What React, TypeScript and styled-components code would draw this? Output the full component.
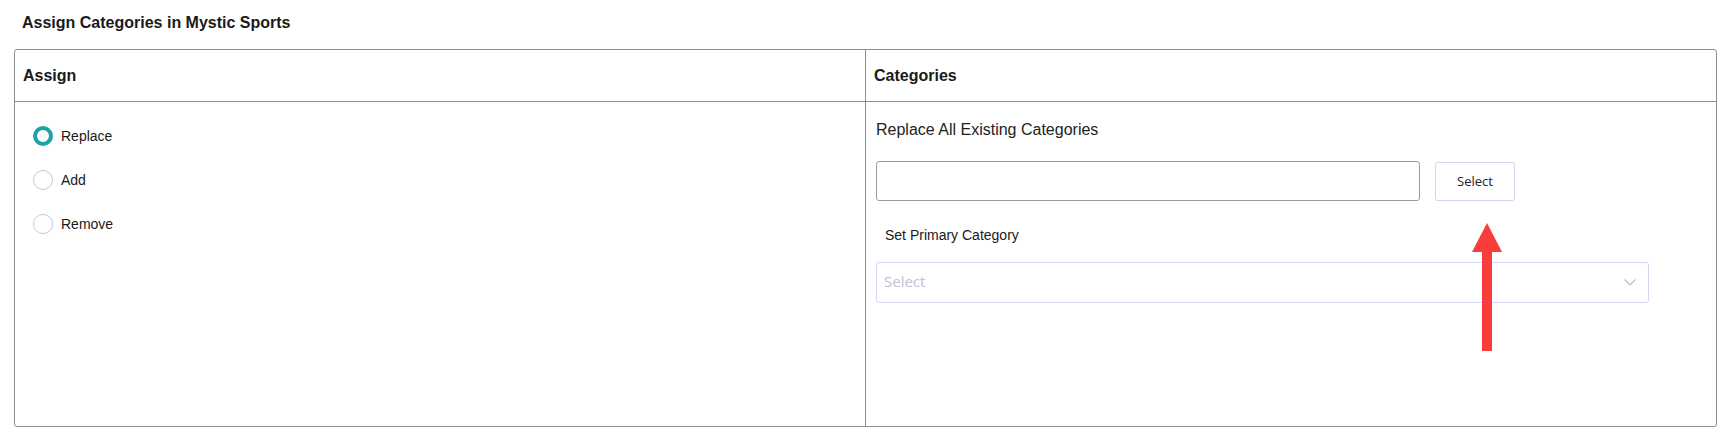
import React, { useState } from 'react';
import styled, { createGlobalStyle } from 'styled-components';

const GlobalStyle = createGlobalStyle`
  * {
    box-sizing: border-box;
  }

  body {
    margin: 0;
    background: #fff;
    color: #1a1a1a;
    font-family: 'Liberation Sans', Arial, sans-serif;
  }
`;

const Page = styled.div`
  padding: 13px 0 0 14px;
  width: 1735px;
`;

const Title = styled.h1`
  margin: 0 0 16px 8px;
  font-size: 16px;
  font-weight: 700;
  line-height: 20px;
`;

const Table = styled.div`
  display: grid;
  grid-template-columns: 851px 850px;
  grid-template-rows: 52px 1fr;
  width: 1703px;
  height: 378px;
  border: 1px solid #8c8c8c;
  border-radius: 3px;
`;

const HeadCell = styled.div<{ divider?: boolean }>`
  display: flex;
  align-items: center;
  padding: 0 8px;
  border-bottom: 1px solid #8c8c8c;
  border-right: ${props => (props.divider ? '1px solid #8c8c8c' : 'none')};
  font-size: 16px;
  font-weight: 700;
  line-height: 20px;
`;

const LeftBody = styled.div`
  padding: 12px 0 0 18px;
  border-right: 1px solid #8c8c8c;
`;

const RadioRow = styled.label`
  display: flex;
  align-items: center;
  gap: 8px;
  height: 44px;
  font-size: 14px;
  cursor: pointer;
`;

const RadioDot = styled.span<{ checked: boolean }>`
  width: 20px;
  height: 20px;
  border-radius: 50%;
  border: ${props => (props.checked ? '4px solid #1ca3a4' : '1px solid #c6c6d6')};
  background: #fff;
`;

const RightBody = styled.div`
  position: relative;
  padding: 18px 10px;
`;

const SectionTitle = styled.div`
  font-size: 16px;
  line-height: 20px;
  color: #222;
`;

const PickRow = styled.div`
  display: flex;
  align-items: center;
  margin-top: 21px;
`;

const TextBox = styled.input`
  width: 544px;
  height: 40px;
  border: 1px solid #9a9a9a;
  border-radius: 3px;
  outline: none;
`;

const SelectButton = styled.button`
  margin-left: 15px;
  width: 80px;
  height: 39px;
  background: #fff;
  border: 1px solid #d4d4f2;
  border-radius: 3px;
  font-family: 'Open Sans', sans-serif;
  font-size: 13px;
  color: #222;
`;

const FieldLabel = styled.div`
  margin-top: 25px;
  padding-left: 9px;
  font-size: 14px;
  line-height: 18px;
`;

const Dropdown = styled.div`
  display: flex;
  align-items: center;
  justify-content: space-between;
  margin-top: 18px;
  width: 773px;
  height: 41px;
  padding: 0 12px 3px 7px;
  border: 1px solid #d6d6f5;
  border-radius: 3px;
  font-family: 'Open Sans', sans-serif;
  font-size: 15px;
  color: #c2c2d2;
`;

const Chevron = styled.svg`
  margin-top: 3px;
`;

const Pointer = styled.svg`
  position: absolute;
  left: 606px;
  top: 121px;
`;

const options = ['Replace', 'Add', 'Remove'];

const App: React.FC = () => {
  const [mode, setMode] = useState('Replace');

  return (
    <Page>
      <GlobalStyle />
      <Title>Assign Categories in Mystic Sports</Title>
      <Table>
        <HeadCell divider>Assign</HeadCell>
        <HeadCell>Categories</HeadCell>
        <LeftBody>
          {options.map(opt => (
            <RadioRow key={opt} onClick={() => setMode(opt)}>
              <RadioDot checked={mode === opt} />
              {opt}
            </RadioRow>
          ))}
        </LeftBody>
        <RightBody>
          <SectionTitle>Replace All Existing Categories</SectionTitle>
          <PickRow>
            <TextBox />
            <SelectButton>Select</SelectButton>
          </PickRow>
          <FieldLabel>Set Primary Category</FieldLabel>
          <Dropdown>
            Select
            <Chevron width="12" height="7" viewBox="0 0 12 7">
              <path d="M0.5 0.5 L6 6 L11.5 0.5" fill="none" stroke="#b9b9d2" strokeWidth="1.2" />
            </Chevron>
          </Dropdown>
          <Pointer width="30" height="128" viewBox="0 0 30 128">
            <polygon points="15,0 30,29 0,29" fill="#f83b3b" />
            <rect x="10" y="28" width="10" height="100" fill="#f83b3b" />
          </Pointer>
        </RightBody>
      </Table>
    </Page>
  );
};

export default App;
